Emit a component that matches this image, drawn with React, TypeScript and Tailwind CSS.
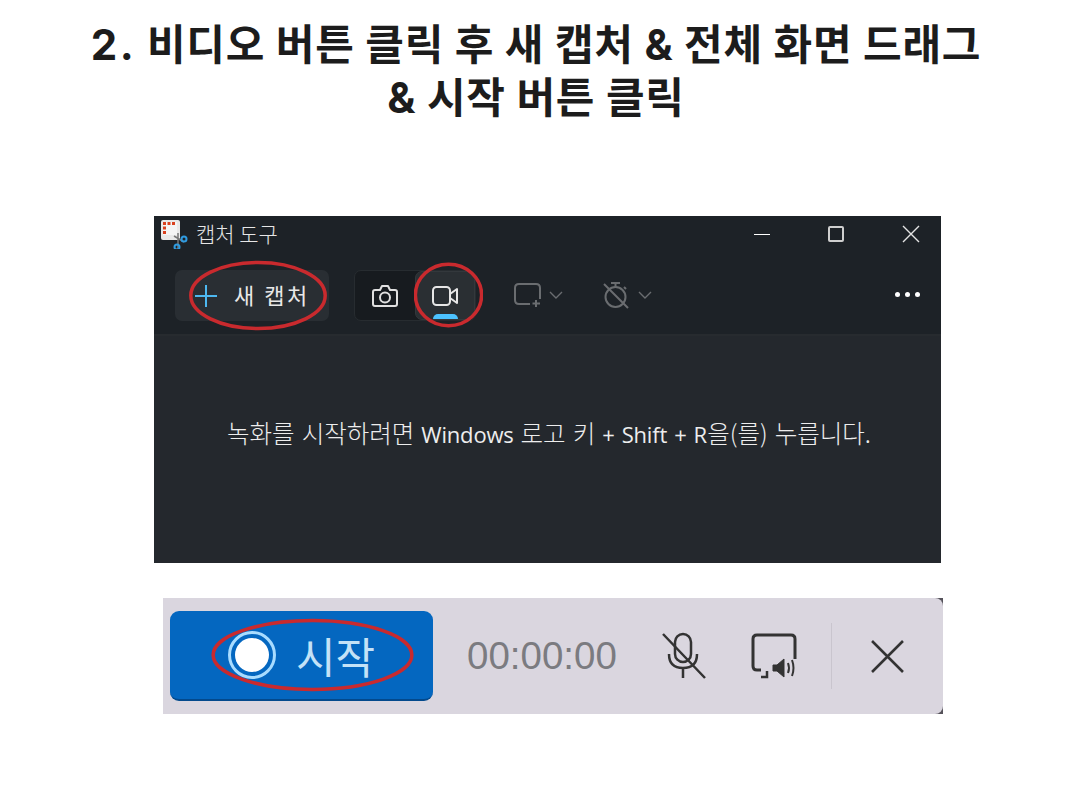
import React from "react";

const ko = { fontFamily: '"Noto Sans CJK KR", sans-serif' };
const latin = { fontFamily: '"Open Sans", sans-serif' };

function Ring({ className }: { className: string }) {
  return (
    <svg className={"absolute " + className} viewBox="0 0 100 100" preserveAspectRatio="none" fill="none">
      <ellipse cx="50" cy="50" rx="48" ry="46.5" stroke="#c92a2e" strokeWidth="3.5" vectorEffect="non-scaling-stroke" />
    </svg>
  );
}

function Logo() {
  return (
    <svg width="28" height="30" viewBox="0 0 28 30" fill="none">
      <rect x="1" y="1" width="19" height="20" rx="2" fill="#e8e8e8" />
      <rect x="3" y="3" width="14" height="13" fill="#f4f4f4" />
      <rect x="3" y="3" width="3" height="3" fill="#d9401e" />
      <rect x="7.5" y="3" width="3" height="3" fill="#d9401e" />
      <rect x="12" y="3" width="3" height="3" fill="#d9401e" />
      <rect x="3" y="7.5" width="3" height="3" fill="#d9401e" />
      <rect x="3" y="12" width="3" height="3" fill="#d9401e" />
      <path d="M14 17 L24 23 M18 14 L18 30" stroke="#777" strokeWidth="1.5" />
      <circle cx="24" cy="20" r="2.5" stroke="#2f9be0" strokeWidth="2" />
      <circle cx="17" cy="28" r="2.5" stroke="#2f9be0" strokeWidth="2" />
    </svg>
  );
}

export default function App() {
  return (
    <div className="w-[1072px] h-[811px] bg-white overflow-hidden flex flex-col">
      <h1
        className="mt-[18px] h-[106px] text-center text-[#1c1c1c] text-[42px] leading-[53px] font-bold tracking-[0.75px]"
        style={{ fontFamily: 'Inter, "Noto Sans CJK KR", sans-serif' }}
      >
        <span className="tracking-[2.5px]">2.</span> 비디오 버튼 클릭 후 새 캡처 &amp; 전체 화면 드래그
        <br />
        &amp; 시작 버튼 클릭
      </h1>

      {/* Snipping tool window */}
      <div className="mt-[92px] ml-[154px] w-[787px] h-[347px] bg-[#1d2227] flex flex-col text-white" style={ko}>
        <div className="h-[36px] flex items-center relative">
          <div className="ml-[6px] mt-[-1px]">
            <Logo />
          </div>
          <span className="ml-[8px] text-[21px] leading-none text-[#e6e6e6] font-light mt-[-2px]">캡처 도구</span>
          <div className="ml-auto flex items-center mr-[21px] gap-[58px]">
            <div className="w-[16px] h-px bg-white" />
            <div className="w-[16px] h-[16px] rounded-[2px] border-2 border-[#cfcfcf]" />
            <svg width="18" height="18" viewBox="0 0 18 18" stroke="#e4e4e4" strokeWidth="1.4">
              <path d="M1 1 L17 17 M17 1 L1 17" />
            </svg>
          </div>
        </div>

        <div className="h-[84px] flex items-start pt-[18px] pl-[21px] relative border-b-2 border-[#272b2f]">
          <div className="w-[154px] h-[51px] rounded-[7px] bg-[#292e33] flex items-center relative">
            <svg className="ml-[20px]" width="22" height="22" viewBox="0 0 22 22" stroke="#4db8f0" strokeWidth="2">
              <path d="M11 0 V22 M0 11 H22" />
            </svg>
            <span className="ml-[17px] mt-[-3px] text-[22px] leading-none text-[#e8e8e8] tracking-[2.5px] font-normal">새 캡처</span>
            <Ring className="left-[13px] top-[-10px] w-[140px] h-[71px]" />
          </div>

          <div className="ml-[25px] w-[122px] h-[51px] rounded-[7px] bg-[#171b1f] border border-[#272c30] flex relative">
            <div className="w-[60px] flex items-center justify-center">
              <svg width="26" height="24" viewBox="0 0 26 24" fill="none" stroke="#e0e0e0" strokeWidth="2" strokeLinejoin="round">
                <path d="M3 6 H8 L10 2 H16 L18 6 H23 Q25 6 25 8 V20 Q25 22 23 22 H3 Q1 22 1 20 V8 Q1 6 3 6 Z" />
                <circle cx="13" cy="13.5" r="5" />
              </svg>
            </div>
            <div className="flex-1 rounded-[7px] bg-[#2a2f33] border border-[#33383c] flex items-center justify-center relative">
              <svg width="26" height="20" viewBox="0 0 26 20" fill="none" stroke="#e6e6e6" strokeWidth="2" strokeLinejoin="round">
                <rect x="1" y="1" width="17" height="18" rx="3.5" />
                <path d="M18 8 L25 3 V17 L18 12" />
              </svg>
              <div className="absolute bottom-0 left-[17px] w-[25px] h-[5px] rounded-t-full bg-[#4cc2ff]" />
            </div>
            <Ring className="left-[59px] top-[-9px] w-[69px] h-[66px]" />
          </div>

          <div className="ml-[38px] mt-[13px] flex items-center gap-[7px]">
            <svg width="28" height="24" viewBox="0 0 28 24" fill="none" stroke="#6a6d70" strokeWidth="2">
              <path d="M16 21 H5 Q1 21 1 17 V5 Q1 1 5 1 H22 Q26 1 26 5 V16" />
              <path d="M22 17 V24 M18.5 20.5 H26" />
            </svg>
            <svg width="14" height="8" viewBox="0 0 14 8" fill="none" stroke="#6a6d70" strokeWidth="1.4">
              <path d="M1 1 L7 7 L13 1" />
            </svg>
          </div>

          <div className="ml-[39px] mt-[11px] flex items-center gap-[8px]">
            <svg width="28" height="28" viewBox="0 0 28 28" fill="none" stroke="#6a6d70" strokeWidth="2">
              <circle cx="13.5" cy="16" r="10" />
              <path d="M9 2 H18 M13.5 6 V2 M22 6 L24 8 M2 3 L26 27" />
            </svg>
            <svg width="14" height="8" viewBox="0 0 14 8" fill="none" stroke="#6a6d70" strokeWidth="1.4">
              <path d="M1 1 L7 7 L13 1" />
            </svg>
          </div>

          <div className="ml-auto mr-[21px] mt-[22px] flex gap-[5px]">
            <div className="w-[5px] h-[5px] rounded-full bg-white" />
            <div className="w-[5px] h-[5px] rounded-full bg-white" />
            <div className="w-[5px] h-[5px] rounded-full bg-white" />
          </div>
        </div>

        <div className="flex-1 bg-[#24282d] flex justify-center items-baseline pt-[82px]">
          <span className="ml-[3px] text-[24.5px] leading-[30px] text-[#ededed] font-light whitespace-pre [word-spacing:1.6px]">
            녹화를 시작하려면 <span style={latin} className="text-[22px] font-normal tracking-[-0.2px]">Windows</span> 로고 키 <span style={latin} className="text-[22px] font-normal tracking-[-0.2px]">+ Shift +</span> <span style={latin} className="text-[22px] font-normal">R</span>을(를) 누릅니다.
          </span>
        </div>
      </div>

      {/* Recording bar */}
      <div className="mt-[35px] ml-[163px] w-[780px] h-[116px] bg-[#55525a]">
        <div className="h-full bg-[#dad6df] rounded-r-[8px] flex items-center" style={ko}>
          <div className="ml-[7px] w-[263px] h-[90px] rounded-[9px] bg-[#0467c0] border-b-2 border-[#03498c] flex items-center relative">
            <div className="ml-[58px] w-[48px] h-[48px] rounded-full border-[3px] border-[#a8dcff] flex items-center justify-center">
              <div className="w-[34px] h-[34px] rounded-full bg-white" />
            </div>
            <span className="ml-[20px] text-[43px] leading-none text-[#c4e2f7] font-normal">시작</span>
            <Ring className="left-[39px] top-[7px] w-[207px] h-[74px]" />
          </div>

          <span className="ml-[34px] text-[38.5px] leading-none text-[#7b7b80]" style={{ fontFamily: '"Liberation Sans", sans-serif' }}>
            00:00:00
          </span>

          <svg className="ml-[44px]" width="46" height="48" viewBox="0 0 46 48" fill="none" stroke="#333" strokeWidth="2.5">
            <rect x="14" y="2" width="16" height="28" rx="8" />
            <path d="M8 22 Q8 36 22 36 Q36 36 36 22 M22 36 V46 M2 2 L44 46" />
          </svg>

          <svg className="ml-[44px]" width="46" height="46" viewBox="0 0 46 46" fill="none" stroke="#333" strokeWidth="3">
            <path d="M10 37 H6 Q2 37 2 33 V6 Q2 2 6 2 H40 Q44 2 44 6 V26" />
            <path d="M10 44 H16 L16 38" strokeWidth="2.5" />
            <path d="M22 32 H26 L33 26 V44 L26 38 H22 Z" fill="#333" strokeWidth="1" />
            <path d="M37 30 Q39 35 37 40 M41 27 Q44 35 41 43" strokeWidth="2" />
          </svg>

          <div className="ml-[34px] w-px h-[66px] bg-[#c9c5ce]" />

          <svg className="ml-[39px]" width="33" height="33" viewBox="0 0 32 32" stroke="#333" strokeWidth="2.5">
            <path d="M1 1 L31 31 M31 1 L1 31" />
          </svg>
        </div>
      </div>
    </div>
  );
}
